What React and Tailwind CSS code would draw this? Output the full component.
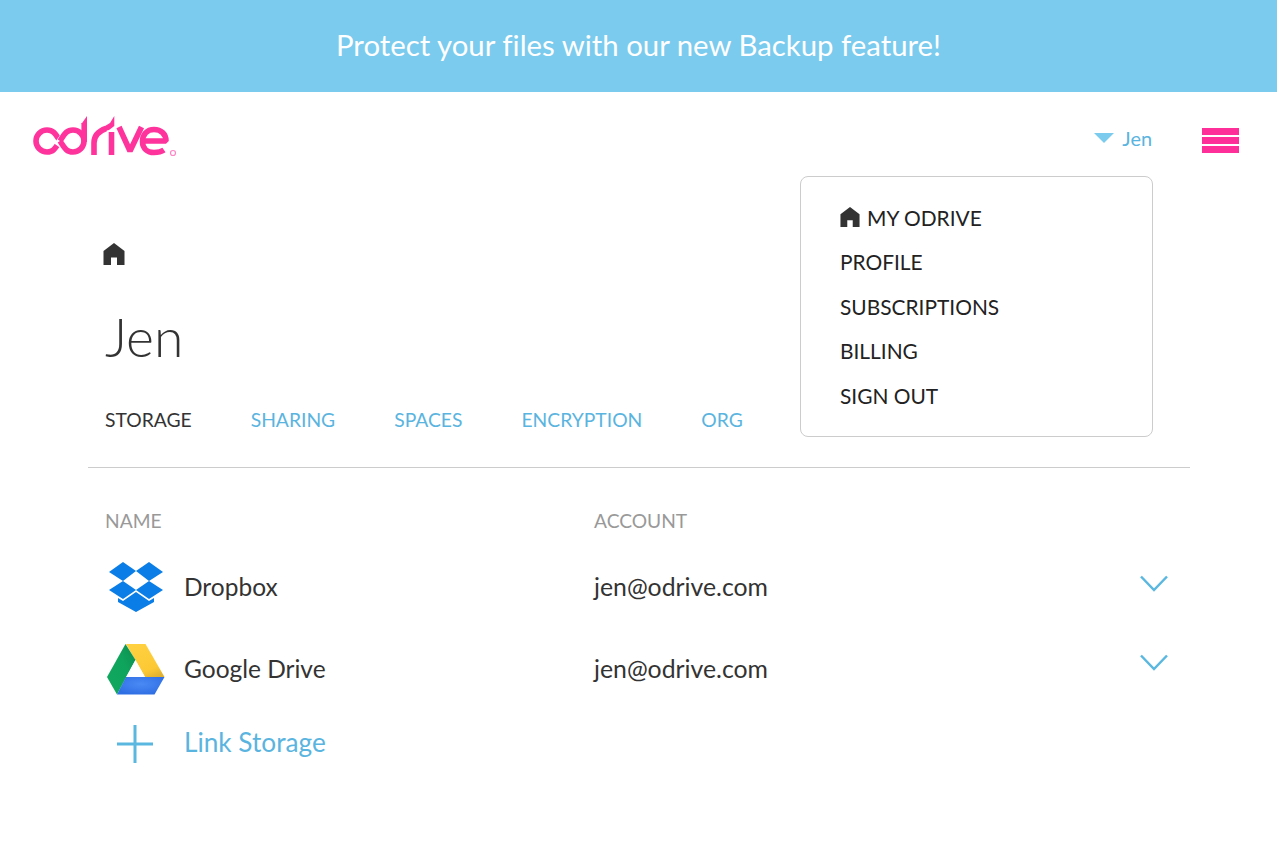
import { useState } from 'react'

const tabs = ['SHARING', 'SPACES', 'ENCRYPTION', 'ORG']
const menu = ['PROFILE', 'SUBSCRIPTIONS', 'BILLING', 'SIGN OUT']

export default function App() {
  const [open] = useState(true)

  return (
    <div className="relative min-h-[855px] bg-white font-['Lato',sans-serif] text-[#333] [font-variant-ligatures:none]">
      <div className="flex h-[92px] items-center justify-center bg-[#7acbee] pb-[2px] text-[29.35px] text-white">
        Protect your files with our new Backup feature!
      </div>

      {/* Header */}
      <div className="flex h-[84px] items-start pl-[32px] pr-[38px] pt-[23px]">
        <Logo />
        <div className="ml-auto mt-[10px] flex items-center text-[19.9px] leading-[26px] text-[#5ab4e0]">
          <svg width="20" height="10" viewBox="0 0 20 10" className="mr-[8px]">
            <polygon points="0,0 20,0 10,10" fill="#7acbee" />
          </svg>
          Jen
        </div>
        <div className="ml-[50px] mt-[13px] flex w-[37px] flex-col gap-[2px]">
          <div className="h-[7px] bg-[#ff2f9a]" />
          <div className="h-[7px] bg-[#ff2f9a]" />
          <div className="h-[7px] bg-[#ff2f9a]" />
        </div>
      </div>

      {open && (
        <div className="absolute left-[800px] top-[176px] h-[261px] w-[353px] rounded-[8px] border border-[#ccc] bg-white pl-[39px] pt-[18.8px] text-[20.9px] leading-[44.5px] text-[#222]">
          <div className="flex items-center">
            <HomeIcon size={20} className="mb-[3px] mr-[7px]" />
            MY ODRIVE
          </div>
          {menu.map((m) => (
            <div key={m}>{m}</div>
          ))}
        </div>
      )}

      {/* Main */}
      <div className="ml-[88px] mr-[87px]">
        <div className="border-b border-[#ccc] px-[17px] pb-[34px] pt-[67px]">
          <HomeIcon size={22} className="-ml-[2px]" />
          <div className="mt-[40px] text-[53.5px] font-light leading-[62px] text-[#333]">Jen</div>
          <div className="mt-[40px] flex gap-[59px] text-[19.3px] leading-[26px] text-[#5ab4e0]">
            <span className="text-[#333]">STORAGE</span>
            {tabs.map((t) => (
              <span key={t}>{t}</span>
            ))}
          </div>
        </div>

        <div className="flex px-[17px] pt-[41px] text-[19.2px] leading-[24px] text-[#999]">
          <div className="w-[489px]">NAME</div>
          <div>ACCOUNT</div>
        </div>

        <Row name="Dropbox" icon={<DropboxIcon />} cls="mt-[25px] h-[58px]" chevron="-mt-[6px]" />
        <Row name="Google Drive" icon={<DriveIcon />} cls="mt-[24px] h-[58px]" chevron="-mt-[12px]" />

        <div className="mt-[25px] flex h-[40px] items-center pl-[29px] text-[26.2px] text-[#5ab4e0]">
          <svg width="36" height="38" viewBox="0 0 36 38" fill="none" stroke="#5ab8e0" strokeWidth="3" className="mt-[2px]">
            <path d="M18 0V38M0 19H36" />
          </svg>
          <span className="ml-[31px]">Link Storage</span>
        </div>
      </div>
    </div>
  )
}

function Row({ name, icon, cls, chevron }) {
  return (
    <div className={`flex items-center text-[24.8px] text-[#333] ${cls}`}>
      <div className="flex w-[96px] justify-center">{icon}</div>
      <div className="w-[410px] text-[24.5px]">{name}</div>
      <div>jen@odrive.com</div>
      <svg width="30" height="18" viewBox="0 0 30 18" fill="none" stroke="#5ab8e0" strokeWidth="2.5" className={`ml-auto mr-[21px] ${chevron}`}>
        <path d="M2 1.500L15 15L28 1.500" />
      </svg>
    </div>
  )
}

function HomeIcon({ size, className }) {
  return (
    <svg width={size} height={size} viewBox="0 0 22 22" className={className}>
      <path d="M11 0L21.500 8V22H14V14.500H8V22H.5V8Z" fill="#333" />
    </svg>
  )
}

function Logo() {
  const pink = '#ff339c'
  return (
    <svg width="146" height="44" viewBox="0 0 146 44" fill="none" stroke={pink} strokeWidth="5.600" strokeLinejoin="bevel">
      {/* infinity loop that turns into the d */}
      <path d="M28 26C24 20 22 15 15 15a11 11 0 0 0 0 22C22 37 24 32 28 26" />
      <path d="M25 30.500L31 22" stroke="#fff" strokeWidth="7" />
      <path d="M28 26C32 20 34 15 41 15a11 11 0 0 1 0 22C34 37 32 32 28 26" />
      <path d="M52.200 27V8" />
      <polygon points="49.400,9 55,1 55,9" fill={pink} stroke="none" />
      {/* r arm runs up into the tick of the i */}
      <path d="M62 40V28c0-8 5-12 12-14.500" />
      <polygon points="73,11 78,8 82.300,1 82.300,11 77,15 73,16" fill={pink} stroke="none" />
      <path d="M79.500 40V17" />
      <path d="M87 12L98 36L109.500 12" />
      <path d="M110.800 26H134c0-7-5-11.500-12-11.500s-11.500 5-11.500 12s5 11 11.500 11c3.500 0 7-.5 10-2.500" />
      <circle cx="141" cy="38" r="2.500" strokeWidth="1.200" opacity="0.6" />
    </svg>
  )
}

function DropboxIcon() {
  return (
    <svg width="54" height="50" viewBox="0 0 54 50" fill="#0a7de6">
      <polygon points="14,0 27,9 14,19 0,10" />
      <polygon points="40,0 54,10 40,19 27,9" />
      <polygon points="14,19 27,28 14,37 0,28" />
      <polygon points="40,19 54,28 40,37 27,28" />
      <polygon points="27,30 40,39 45,36 45,40 27,50 9,40 9,36 14,39" />
    </svg>
  )
}

function DriveIcon() {
  return (
    <svg width="58" height="51" viewBox="0 0 58 51">
      <defs>
        <radialGradient id="driveBlue" cx="0.5" cy="0.4" r="0.6">
          <stop offset="0" stopColor="#4a8af5" />
          <stop offset="1" stopColor="#2f6fe4" />
        </radialGradient>
        <linearGradient id="driveYellow" x1="0.3" y1="0" x2="0.8" y2="1">
          <stop offset="0" stopColor="#ffd040" />
          <stop offset="0.75" stopColor="#fcc934" />
          <stop offset="1" stopColor="#e0b030" />
        </linearGradient>
        <linearGradient id="driveGreen" x1="1" y1="0" x2="0" y2="1">
          <stop offset="0" stopColor="#0c8a50" />
          <stop offset="0.4" stopColor="#0fa45c" />
          <stop offset="1" stopColor="#11a860" />
        </linearGradient>
      </defs>
      <polygon points="19,0 38.500,0 57.500,33 38,33" fill="url(#driveYellow)" />
      <polygon points="18.500,0 28.500,16 10,50.500 0,33" fill="url(#driveGreen)" />
      <polygon points="19,33 57.500,33 47.500,50.500 10,50.500" fill="url(#driveBlue)" />
      <polygon points="28.500,16 19,33 38,33" fill="#fff" />
    </svg>
  )
}
